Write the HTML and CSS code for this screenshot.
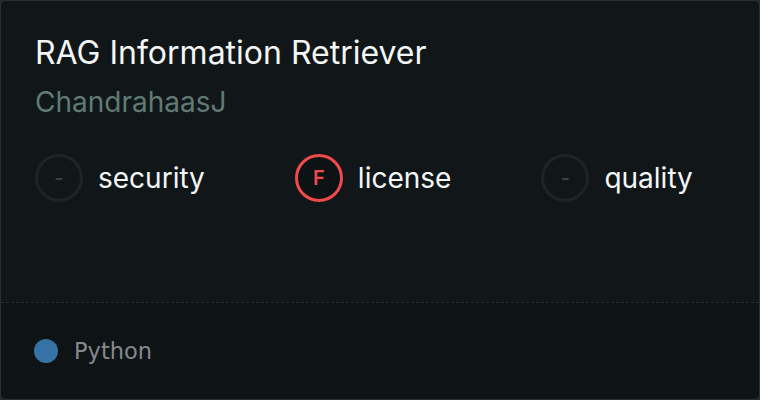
FILE: index.html
```html
<!DOCTYPE html>
<html>
<head>
<meta charset="utf-8">
<link rel="stylesheet" href="styles.css">
</head>
<body>
<div class="card">
  <div class="top">
    <div class="title">RAG Information Retriever</div>
    <div class="owner">ChandrahaasJ</div>
    <div class="scores">
      <div class="score"><span class="ring">-</span><span class="label">security</span></div>
      <div class="score"><span class="ring fail">F</span><span class="label">license</span></div>
      <div class="score"><span class="ring">-</span><span class="label">quality</span></div>
    </div>
  </div>
  <div class="bottom">
    <span class="dot"></span><span class="lang">Python</span>
  </div>
</div>
</body>
</html>
```
FILE: styles.css
```css
html, body {
  margin: 0;
  padding: 0;
  background: #262b2e;
}
.card {
  box-sizing: border-box;
  width: 760px;
  height: 400px;
  border: 1px solid #2a2f32;
  border-radius: 6px;
  background: #111719;
  display: flex;
  flex-direction: column;
  overflow: hidden;
  font-family: Inter, "Noto Sans", sans-serif;
}
.top {
  flex: 1;
  padding: 33px 34px 0 34px;
}
.title {
  color: #f4f6f6;
  font-size: 32px;
  line-height: 38px;
}
.owner {
  margin-top: 14px;
  color: #5f7b74;
  font-size: 28px;
  line-height: 33px;
}
.scores {
  margin-top: 35px;
  display: flex;
  gap: 90px;
}
.score {
  display: flex;
  align-items: center;
  gap: 15px;
}
.ring {
  box-sizing: border-box;
  width: 48px;
  height: 48px;
  border-radius: 50%;
  border: 3px solid #1e2427;
  display: flex;
  align-items: center;
  justify-content: center;
  color: #3a4043;
  font-size: 20px;
  font-weight: 600;
}
.ring.fail {
  border-color: #f04a4a;
  color: #f04a4a;
  background: #0d1214;
}
.label {
  color: #f4f6f6;
  font-size: 28px;
  line-height: 34px;
}
.bottom {
  height: 96px;
  border-top: 1px dashed #262c2f;
  background: #0e1316;
  display: flex;
  align-items: center;
  padding-left: 33px;
  gap: 16px;
}
.dot {
  width: 24px;
  height: 24px;
  border-radius: 50%;
  background: #3572a5;
}
.lang {
  color: #85898c;
  font-family: "DejaVu Sans", sans-serif;
  font-size: 22.5px;
}
```
